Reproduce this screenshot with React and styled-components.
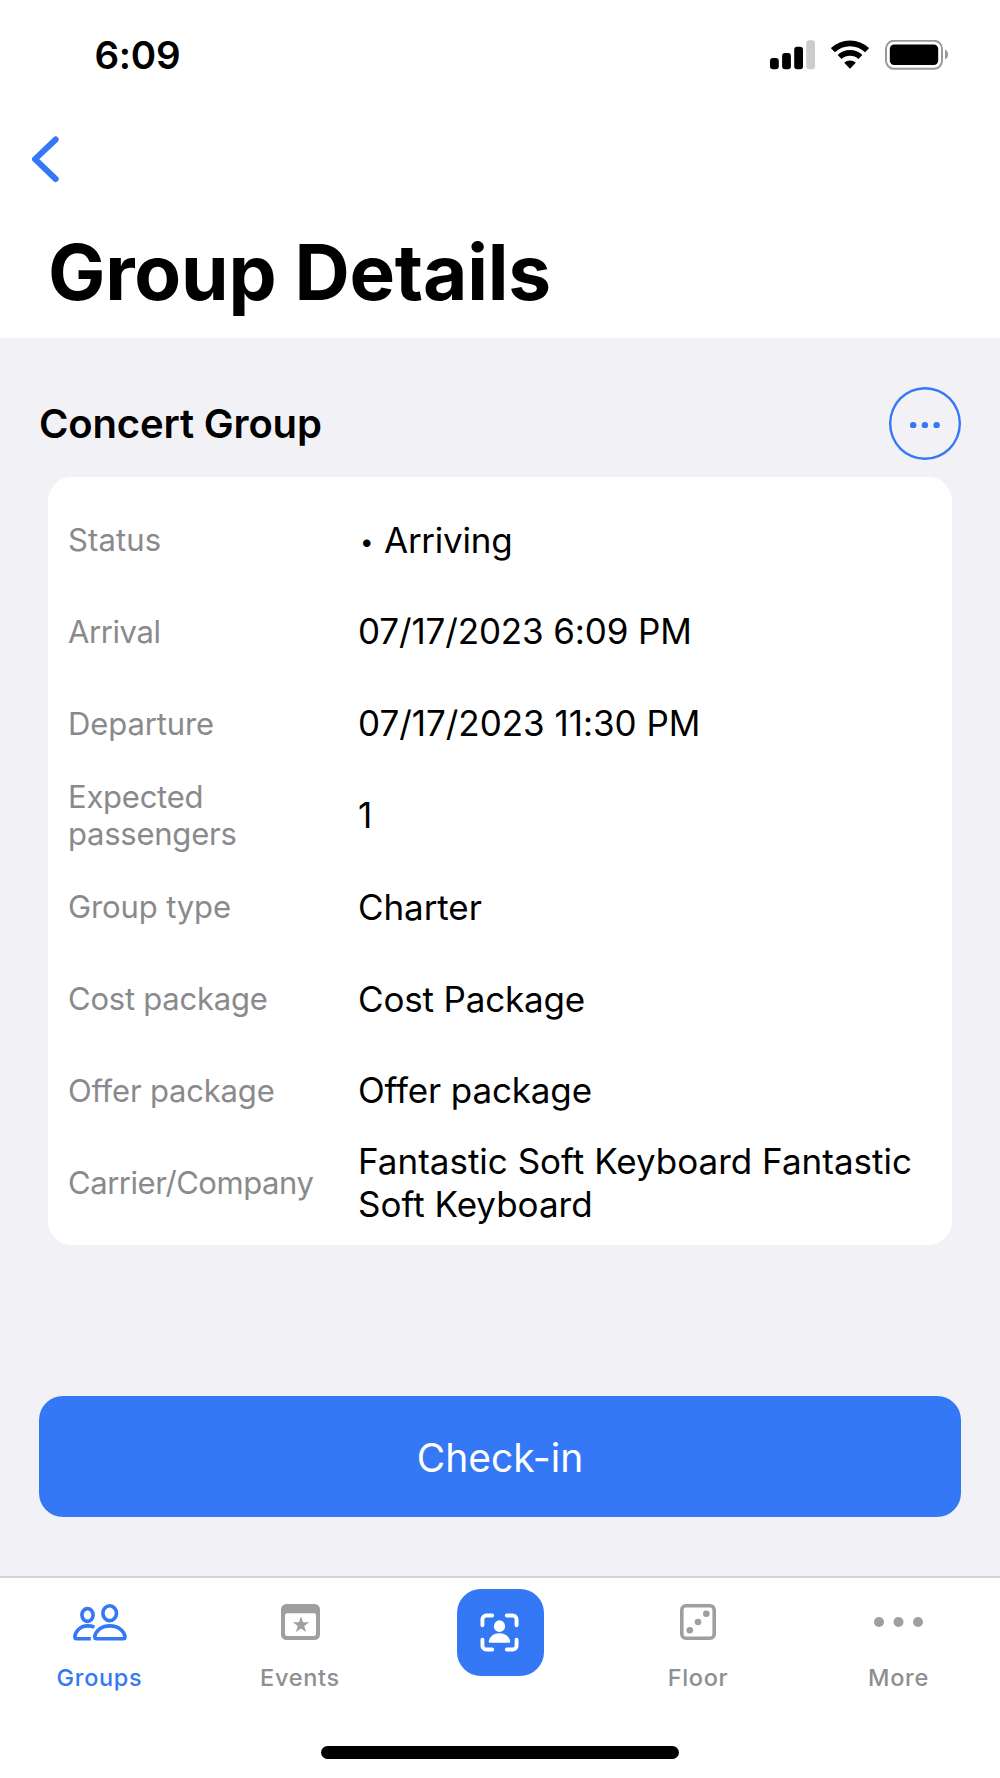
import React from "react";
import styled, { createGlobalStyle } from "styled-components";

const BLUE = "#3478f6";

const GlobalStyle = createGlobalStyle`
  * { box-sizing: border-box; }
  body { margin: 0; background: #fff; }
`;

const Screen = styled.div`
  width: 1000px;
  height: 1778px;
  display: flex;
  flex-direction: column;
  overflow: hidden;
  background: #fff;
  color: #000;
  font-family: Inter, "Liberation Sans", sans-serif;
`;

const Header = styled.header`
  height: 338px;
  display: flex;
  flex-direction: column;
`;

const StatusBar = styled.div`
  height: 110px;
  display: flex;
  align-items: center;
  justify-content: space-between;
  padding: 0 51px 0 94.5px;
`;

const Clock = styled.span`
  font-size: 38.5px;
  font-weight: 600;
  line-height: 44px;
  letter-spacing: -0.3px;
`;

const StatusIcons = styled.div`
  display: flex;
  align-items: center;
  gap: 16px;
  svg { display: block; }
`;

const BackButton = styled.button`
  width: 70px;
  height: 98px;
  border: 0;
  background: none;
  padding: 0 0 0 30px;
  display: flex;
  align-items: center;
`;

const Title = styled.h1`
  margin: 18px 0 0 48px;
  font-size: 76.5px;
  line-height: 92px;
  font-weight: 700;
  letter-spacing: -0.2px;
`;

const Content = styled.main`
  height: 1238px;
  background: #f1f1f6;
  padding: 49px 39px 0;
`;

const GroupHeader = styled.div`
  height: 73px;
  display: flex;
  align-items: center;
  justify-content: space-between;
`;

const GroupName = styled.h2`
  margin: 0;
  font-size: 40px;
  line-height: 48px;
  font-weight: 600;
  letter-spacing: -0.16px;
`;

const MoreButton = styled.button`
  width: 72.5px;
  height: 73px;
  padding: 3px 0 0;
  border: 0;
  box-shadow: inset 0 0 0 2.4px ${BLUE};
  border-radius: 50%;
  background: none;
  display: flex;
  align-items: center;
  justify-content: center;
`;

const Card = styled.dl`
  margin: 17px 9px 0;
  height: 768px;
  padding: 17.3px 20px 16px;
  border-radius: 24px;
  background: #fff;
`;

const Row = styled.div`
  height: 91.8px;
  display: grid;
  grid-template-columns: 290px 1fr;
  align-items: center;
`;

const Label = styled.dt`
  width: 260px;
  padding-bottom: 1px;
  font-size: 31px;
  line-height: 37px;
  letter-spacing: ${(p) => p.$tracking}px;
  color: #8a8a8c;
`;

const Value = styled.dd`
  margin: 0;
  font-size: 35px;
  line-height: 43px;
  letter-spacing: ${(p) => p.$tracking}px;
  white-space: nowrap;
`;

const Bullet = styled.span`
  display: inline-block;
  width: 26px;
  padding-left: 2px;
  font-size: 24px;
  line-height: 0;
  vertical-align: 3px;
`;

const CheckIn = styled.button`
  display: block;
  width: 100%;
  height: 121px;
  margin-top: 151px;
  padding: 2px 0 0;
  border: 0;
  border-radius: 24px;
  background: ${BLUE};
  color: #fff;
  font: 400 39px/44px Inter, "Liberation Sans", sans-serif;
`;

const TabBar = styled.nav`
  height: 154px;
  border-top: 2px solid #d3d3d6;
  display: grid;
  grid-template-columns: 199px 202px 198px 198px 203px;
`;

const Tab = styled.div`
  display: flex;
  flex-direction: column;
  align-items: center;
  color: ${(p) => (p.$active ? BLUE : "#8e8e93")};
`;

const TabIcon = styled.div`
  height: 88px;
  display: flex;
  align-items: center;
`;

const TabLabel = styled.span`
  margin-top: -2px;
  font-size: 23.5px;
  line-height: 28px;
  font-weight: 500;
  letter-spacing: 0.7px;
`;

const ScanButton = styled.div`
  width: 87px;
  height: 87px;
  margin-top: 11px;
  padding-right: 1px;
  border-radius: 24px;
  background: ${BLUE};
  display: flex;
  align-items: center;
  justify-content: center;
`;

const HomeArea = styled.footer`
  height: 48px;
  display: flex;
  justify-content: center;
  align-items: flex-start;
  padding-top: 16px;
`;

const HomeIndicator = styled.div`
  width: 358px;
  height: 12.5px;
  border-radius: 7px;
  background: #000;
`;

const Signal = () => (
  <svg width="46" height="30" viewBox="0 0 46 30">
    <rect x="1" y="18" width="8.8" height="11.2" rx="3" />
    <rect x="13.1" y="13" width="8.8" height="16.2" rx="3" />
    <rect x="25.2" y="6.8" width="8.8" height="22.4" rx="3" />
    <rect x="37.2" y="0.2" width="8.8" height="29" rx="3" fill="#ccc" />
  </svg>
);

const Wifi = () => (
  <svg width="38" height="30" viewBox="0 0 38 30">
    <g fill="none" stroke="#000" strokeWidth="5.8">
      <path d="M1.9 10.2A24.6 24.6 0 0 1 36.1 10.2" />
      <path d="M8.6 17A15.2 15.2 0 0 1 29.4 17" />
    </g>
    <path d="M13.2 22.8a8.4 8.4 0 0 1 11.6 0L19 28.8z" />
  </svg>
);

const Battery = () => (
  <svg width="64" height="30" viewBox="0 0 64 30">
    <rect x="1" y="0.8" width="56" height="28" rx="8" fill="none" stroke="#999" strokeWidth="2" />
    <rect x="4.8" y="4.4" width="48.4" height="20.6" rx="4.5" />
    <path d="M60 9.6a5.6 5.6 0 0 1 0 10z" fill="#999" />
  </svg>
);

const BackIcon = () => (
  <svg width="32" height="48" viewBox="0 0 32 48" fill="none" stroke={BLUE} strokeWidth="6" strokeLinecap="round" strokeLinejoin="round">
    <path d="M25.7 4.5L5 24.2L25.7 44" />
  </svg>
);

const Dots = ({ gap, r, color }) => (
  <svg width={gap * 2 + r * 2} height={r * 2} fill={color}>
    <circle cx={r} cy={r} r={r} />
    <circle cx={r + gap} cy={r} r={r} />
    <circle cx={r + gap * 2} cy={r} r={r} />
  </svg>
);

const GroupsIcon = () => (
  <svg width="54" height="37" viewBox="0 0 54 37" fill="none" stroke={BLUE} strokeWidth="3.6" strokeLinejoin="round" strokeLinecap="round">
    <ellipse cx="14.5" cy="11" rx="5.6" ry="6.4" />
    <ellipse cx="36.7" cy="9.2" rx="6.8" ry="7.4" />
    <path d="M21.4 23.2C19.3 22.3 17 21.9 14.6 21.9C6.5 21.9 1.9 28.4 1.9 33c0 1.1.5 1.7 1.7 1.7H17.8" strokeLinecap="butt" />
    <path d="M21.8 33c0-4.8 5.6-11.1 15-11.1S51.9 28.2 51.9 33c0 1.1-.6 1.7-1.8 1.7H23.6c-1.2 0-1.8-.6-1.8-1.7z" />
  </svg>
);

const EventsIcon = () => (
  <svg width="39" height="36" viewBox="0 0 39 36" fill="#9f9f9f">
    <path fillRule="evenodd" d="M5.5 0h28A5.5 5.5 0 0 1 39 5.5V30.5A5.5 5.5 0 0 1 33.5 36H5.5A5.5 5.5 0 0 1 0 30.5V5.5A5.5 5.5 0 0 1 5.5 0zM6 9.3A2 2 0 0 0 4 11.3V30A2 2 0 0 0 6 32H33A2 2 0 0 0 35 30V11.3A2 2 0 0 0 33 9.3z" />
    <path d="M20 12.3l2 6h6.2l-5 3.7 1.9 6.1-5.1-3.7-5.1 3.7 1.9-6.1-5-3.7h6.2z" />
  </svg>
);

const ScanIcon = () => (
  <svg width="39" height="39" viewBox="0 0 40 40" fill="#fff">
    <path
      d="M2.5 12.5V6.5a4 4 0 0 1 4-4H12.5M27.5 2.5h6a4 4 0 0 1 4 4v6M37.5 27.5v6a4 4 0 0 1-4 4h-6M12.5 37.5h-6a4 4 0 0 1-4-4v-6"
      fill="none"
      stroke="#fff"
      strokeWidth="4"
      strokeLinecap="round"
    />
    <ellipse cx="20" cy="13.5" rx="5.7" ry="6.1" />
    <path d="M10.7 30.6c-1.3 0-2-.7-1.7-1.9C9.9 24.3 14 20.7 20 20.7s10.1 3.6 11 8c.3 1.2-.4 1.9-1.7 1.9z" />
  </svg>
);

const FloorIcon = () => (
  <svg width="36" height="36" viewBox="0 0 36 36" fill="#9f9f9f">
    <rect x="1.8" y="1.8" width="32.4" height="32.4" rx="4" fill="none" stroke="#9f9f9f" strokeWidth="3.6" />
    <circle cx="26.3" cy="9.8" r="3.3" />
    <circle cx="18" cy="18" r="3.3" />
    <circle cx="9.8" cy="26.3" r="3.3" />
  </svg>
);

const rows = [
  { label: "Status", value: <><Bullet>•</Bullet>Arriving</>, labelTracking: 0.15, valueTracking: -0.25 },
  { label: "Arrival", value: "07/17/2023 6:09 PM", labelTracking: -0.4, valueTracking: -0.13 },
  { label: "Departure", value: "07/17/2023 11:30 PM", labelTracking: -0.1, valueTracking: -0.02 },
  { label: "Expected passengers", value: "1", labelTracking: -0.24, valueTracking: 0 },
  { label: "Group type", value: "Charter", labelTracking: -0.12, valueTracking: -0.08 },
  { label: "Cost package", value: "Cost Package", labelTracking: -0.24, valueTracking: -0.17 },
  { label: "Offer package", value: "Offer package", labelTracking: -0.18, valueTracking: -0.15 },
  {
    label: "Carrier/Company",
    value: <>Fantastic Soft Keyboard Fantastic<br />Soft Keyboard</>,
    labelTracking: -0.45,
    valueTracking: 0,
  },
];

export default function App() {
  return (
    <Screen>
      <GlobalStyle />
      <Header>
        <StatusBar>
          <Clock>6:09</Clock>
          <StatusIcons>
            <Signal />
            <Wifi />
            <Battery />
          </StatusIcons>
        </StatusBar>
        <BackButton aria-label="Back"><BackIcon /></BackButton>
        <Title>Group Details</Title>
      </Header>
      <Content>
        <GroupHeader>
          <GroupName>Concert Group</GroupName>
          <MoreButton aria-label="Group actions"><Dots gap={11.7} r={3.2} color={BLUE} /></MoreButton>
        </GroupHeader>
        <Card>
          {rows.map((row) => (
            <Row key={row.label}>
              <Label $tracking={row.labelTracking}>{row.label}</Label>
              <Value $tracking={row.valueTracking}>{row.value}</Value>
            </Row>
          ))}
        </Card>
        <CheckIn>Check-in</CheckIn>
      </Content>
      <TabBar>
        <Tab $active><TabIcon><GroupsIcon /></TabIcon><TabLabel>Groups</TabLabel></Tab>
        <Tab><TabIcon><EventsIcon /></TabIcon><TabLabel>Events</TabLabel></Tab>
        <Tab><ScanButton><ScanIcon /></ScanButton></Tab>
        <Tab><TabIcon><FloorIcon /></TabIcon><TabLabel>Floor</TabLabel></Tab>
        <Tab><TabIcon><Dots gap={19.5} r={5} color="#9f9f9f" /></TabIcon><TabLabel>More</TabLabel></Tab>
      </TabBar>
      <HomeArea><HomeIndicator /></HomeArea>
    </Screen>
  );
}
